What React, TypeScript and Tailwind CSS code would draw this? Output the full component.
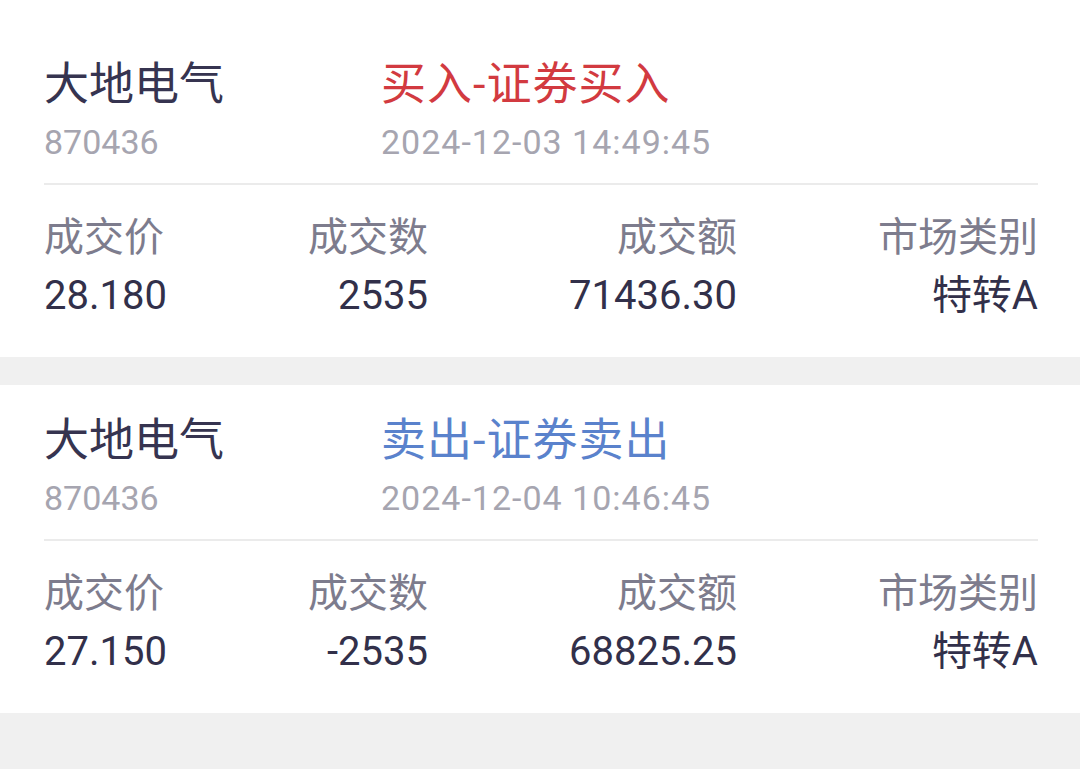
import React from "react";

type Trade = {
  name: string;
  code: string;
  action: string;
  buy: boolean;
  time: string;
  price: string;
  qty: string;
  amount: string;
  market: string;
  first?: boolean;
};

const trades: Trade[] = [
  {
    name: "大地电气",
    code: "870436",
    action: "买入-证券买入",
    buy: true,
    time: "2024-12-03 14:49:45",
    price: "28.180",
    qty: "2535",
    amount: "71436.30",
    market: "特转A",
    first: true,
  },
  {
    name: "大地电气",
    code: "870436",
    action: "卖出-证券卖出",
    buy: false,
    time: "2024-12-04 10:46:45",
    price: "27.150",
    qty: "-2535",
    amount: "68825.25",
    market: "特转A",
  },
];

function Card({ t }: { t: Trade }) {
  return (
    <div
      className={`bg-white pl-[44px] pr-[42px] pb-[37px] ${t.first ? "pt-[63px]" : "pt-[34px]"}`}
    >
      <div className="flex">
        <div className="w-[337px] shrink-0 flex flex-col">
          <div className="text-[45px] leading-[44px] text-[#363450]">{t.name}</div>
          <div className="mt-[15px] text-[34px] leading-[40px] text-[#a6a5b0]">{t.code}</div>
        </div>
        <div className="flex flex-col">
          <div
            className={`text-[45px] leading-[44px] tracking-[1px] ${t.buy ? "text-[#d23a40]" : "text-[#5a82cc]"}`}
          >
            {t.action}
          </div>
          <div className="mt-[15px] text-[34px] leading-[40px] tracking-[1px] text-[#a6a5b0]">{t.time}</div>
        </div>
      </div>
      <div className="mt-[21px] h-[2px] bg-[#ebebeb]" />
      <div className="mt-[29px] flex justify-between">
        <div className="flex flex-col items-start">
          <div className="text-[40px] leading-[48px] text-[#7d7c8d]">成交价</div>
          <div className="mt-[10px] text-[40px] leading-[48px] text-[#32304a]">{t.price}</div>
        </div>
        <div className="flex flex-col items-end">
          <div className="text-[40px] leading-[48px] text-[#7d7c8d]">成交数</div>
          <div className="mt-[10px] text-[40px] leading-[48px] text-[#32304a]">{t.qty}</div>
        </div>
        <div className="flex flex-col items-end">
          <div className="text-[40px] leading-[48px] text-[#7d7c8d]">成交额</div>
          <div className="mt-[10px] text-[40px] leading-[48px] text-[#32304a]">{t.amount}</div>
        </div>
        <div className="flex flex-col items-end">
          <div className="text-[40px] leading-[48px] text-[#7d7c8d]">市场类别</div>
          <div className="mt-[10px] text-[40px] leading-[48px] text-[#32304a]">{t.market}</div>
        </div>
      </div>
    </div>
  );
}

export default function App() {
  return (
    <div
      className="min-h-[769px] w-[1080px] bg-[#f0f0f0] flex flex-col gap-[28px]"
      style={{ fontFamily: "Roboto, 'Noto Sans CJK SC', sans-serif" }}
    >
      {trades.map((t, i) => (
        <Card key={i} t={t} />
      ))}
    </div>
  );
}
